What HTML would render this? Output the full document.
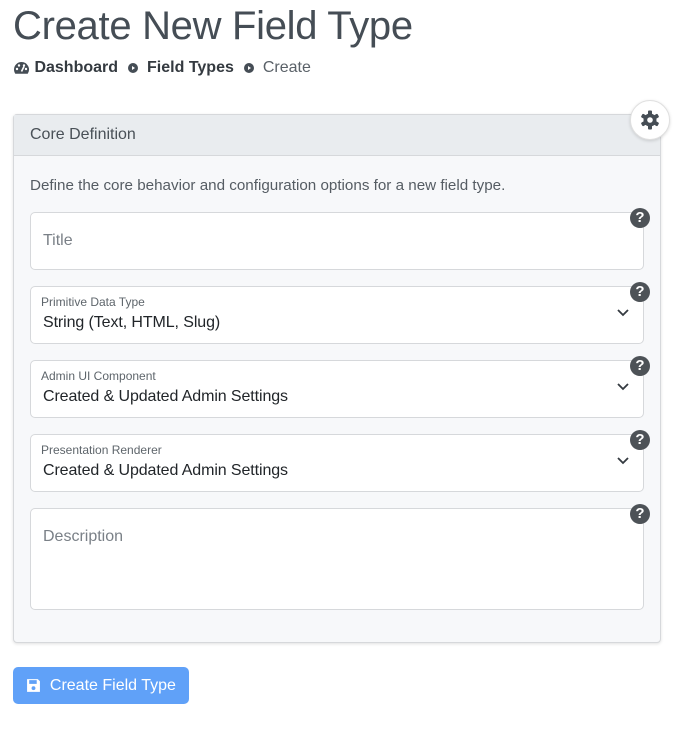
<!DOCTYPE html>
<html><head><style>
*{box-sizing:border-box;margin:0;padding:0}
body{width:678px;height:732px;background:#fff;font-family:"Liberation Sans",sans-serif;color:#495057;position:relative;overflow:hidden}
h1{position:absolute;left:13px;top:4px;font-size:40px;font-weight:400;color:#454d55;letter-spacing:-0.3px}
.bc{position:absolute;left:13px;top:59px;font-size:16px;color:#343a40;display:flex;align-items:center}
.bc b{font-weight:700;color:#343a40}
.dot{display:inline-block;width:10px;height:10px;border-radius:50%;background:#454d55;margin:0 9px 0 10px;position:relative}
.dot:after{content:"";position:absolute;left:4px;top:3px;border-left:3px solid #fff;border-top:2px solid transparent;border-bottom:2px solid transparent}
.card{position:absolute;left:13px;top:114px;width:648px;height:529px;border:1px solid #d6d8db;border-radius:4px;background:#f7f8fa;box-shadow:0 1px 3px rgba(0,0,0,.12)}
.hd{height:41px;background:#e9ecef;border-bottom:1px solid #d6d8db;padding:11px 16px;font-size:16px;color:#495057}
.desc{position:absolute;left:16px;top:62px;font-size:15.2px;color:#555c63}
.f{position:absolute;left:16px;width:614px;background:#fff;border:1px solid #d6d8db;border-radius:5px}
.ph{position:absolute;left:12px;font-size:16px;color:#7a8087}
.lb{position:absolute;left:10px;top:8px;font-size:12px;color:#5e656b}
.v{position:absolute;left:12px;top:27px;font-size:16px;color:#212529;letter-spacing:-0.1px}
.ch{position:absolute;right:14px;top:22px}
.q{position:absolute;left:616px;width:20px;height:20px;border-radius:50%;background:#4d5257;color:#fff;font-weight:700;font-size:15px;text-align:center;line-height:20px}
.gear{position:absolute;left:630px;top:100px;width:40px;height:40px;border-radius:50%;background:#fff;border:1px solid #e0e0e0;box-shadow:0 1px 3px rgba(0,0,0,.15);display:flex;align-items:center;justify-content:center}
.btn{position:absolute;left:13px;top:667px;width:176px;height:37px;background:#60a1f8;border-radius:5px;color:#fff;font-size:16px;display:flex;align-items:center;padding-left:13px}
</style></head><body>
<h1>Create New Field Type</h1>
<div class="bc"><svg width="17" height="14" viewBox="0 0 17 14"><path d="M8.5 1A7.5 7.5 0 0 0 1 8.5c0 1.6.5 3 1.3 4.2h12.4A7.5 7.5 0 0 0 8.5 1z" fill="#454d55"/><circle cx="4" cy="8" r="1.2" fill="#fff"/><circle cx="6" cy="4.5" r="1.2" fill="#fff"/><circle cx="11" cy="4.5" r="1.2" fill="#fff"/><circle cx="13" cy="8" r="1.2" fill="#fff"/><path d="M8.5 10.5L11 5.5" stroke="#fff" stroke-width="1.6"/></svg>&nbsp;<b>Dashboard</b><span class="dot"></span><b>Field Types</b><span class="dot"></span><span style="color:#5a6168">Create</span></div>
<div class="card">
<div class="hd">Core Definition</div>
<div class="desc">Define the core behavior and configuration options for a new field type.</div>
<div class="f" style="top:97px;height:58px"><span class="ph" style="top:19px">Title</span></div>
<div class="f" style="top:171px;height:58px"><span class="lb">Primitive Data Type</span><span class="v">String (Text, HTML, Slug)</span><svg class="ch" width="12" height="8" viewBox="0 0 12 8"><path d="M1 1l5 5 5-5" stroke="#343a40" stroke-width="1.8" fill="none"/></svg></div>
<div class="f" style="top:245px;height:58px"><span class="lb">Admin UI Component</span><span class="v">Created &amp; Updated Admin Settings</span><svg class="ch" width="12" height="8" viewBox="0 0 12 8"><path d="M1 1l5 5 5-5" stroke="#343a40" stroke-width="1.8" fill="none"/></svg></div>
<div class="f" style="top:319px;height:58px"><span class="lb">Presentation Renderer</span><span class="v">Created &amp; Updated Admin Settings</span><svg class="ch" width="12" height="8" viewBox="0 0 12 8"><path d="M1 1l5 5 5-5" stroke="#343a40" stroke-width="1.8" fill="none"/></svg></div>
<div class="f" style="top:393px;height:102px"><span class="ph" style="top:19px">Description</span></div>
<div class="q" style="top:93px">?</div>
<div class="q" style="top:167px">?</div>
<div class="q" style="top:241px">?</div>
<div class="q" style="top:315px">?</div>
<div class="q" style="top:389px">?</div>
</div>
<div class="gear"><svg width="20" height="20" viewBox="0 0 20 20"><g fill="#454d55"><circle cx="10" cy="10" r="6.5"/><rect x="8" y="0.5" width="4" height="19" rx="1"/><rect x="8" y="0.5" width="4" height="19" rx="1" transform="rotate(60 10 10)"/><rect x="8" y="0.5" width="4" height="19" rx="1" transform="rotate(120 10 10)"/></g><circle cx="10" cy="10" r="2.8" fill="#fff"/></svg></div>
<div class="btn"><svg width="15" height="15" viewBox="0 0 14 14"><path d="M1 1h10l2 2v10H1z" fill="#fff"/><rect x="3" y="2" width="7" height="3.5" fill="#60a1f8"/><circle cx="7" cy="9.5" r="1.8" fill="#60a1f8"/></svg>&nbsp;&nbsp;Create Field Type</div>
</body></html>
